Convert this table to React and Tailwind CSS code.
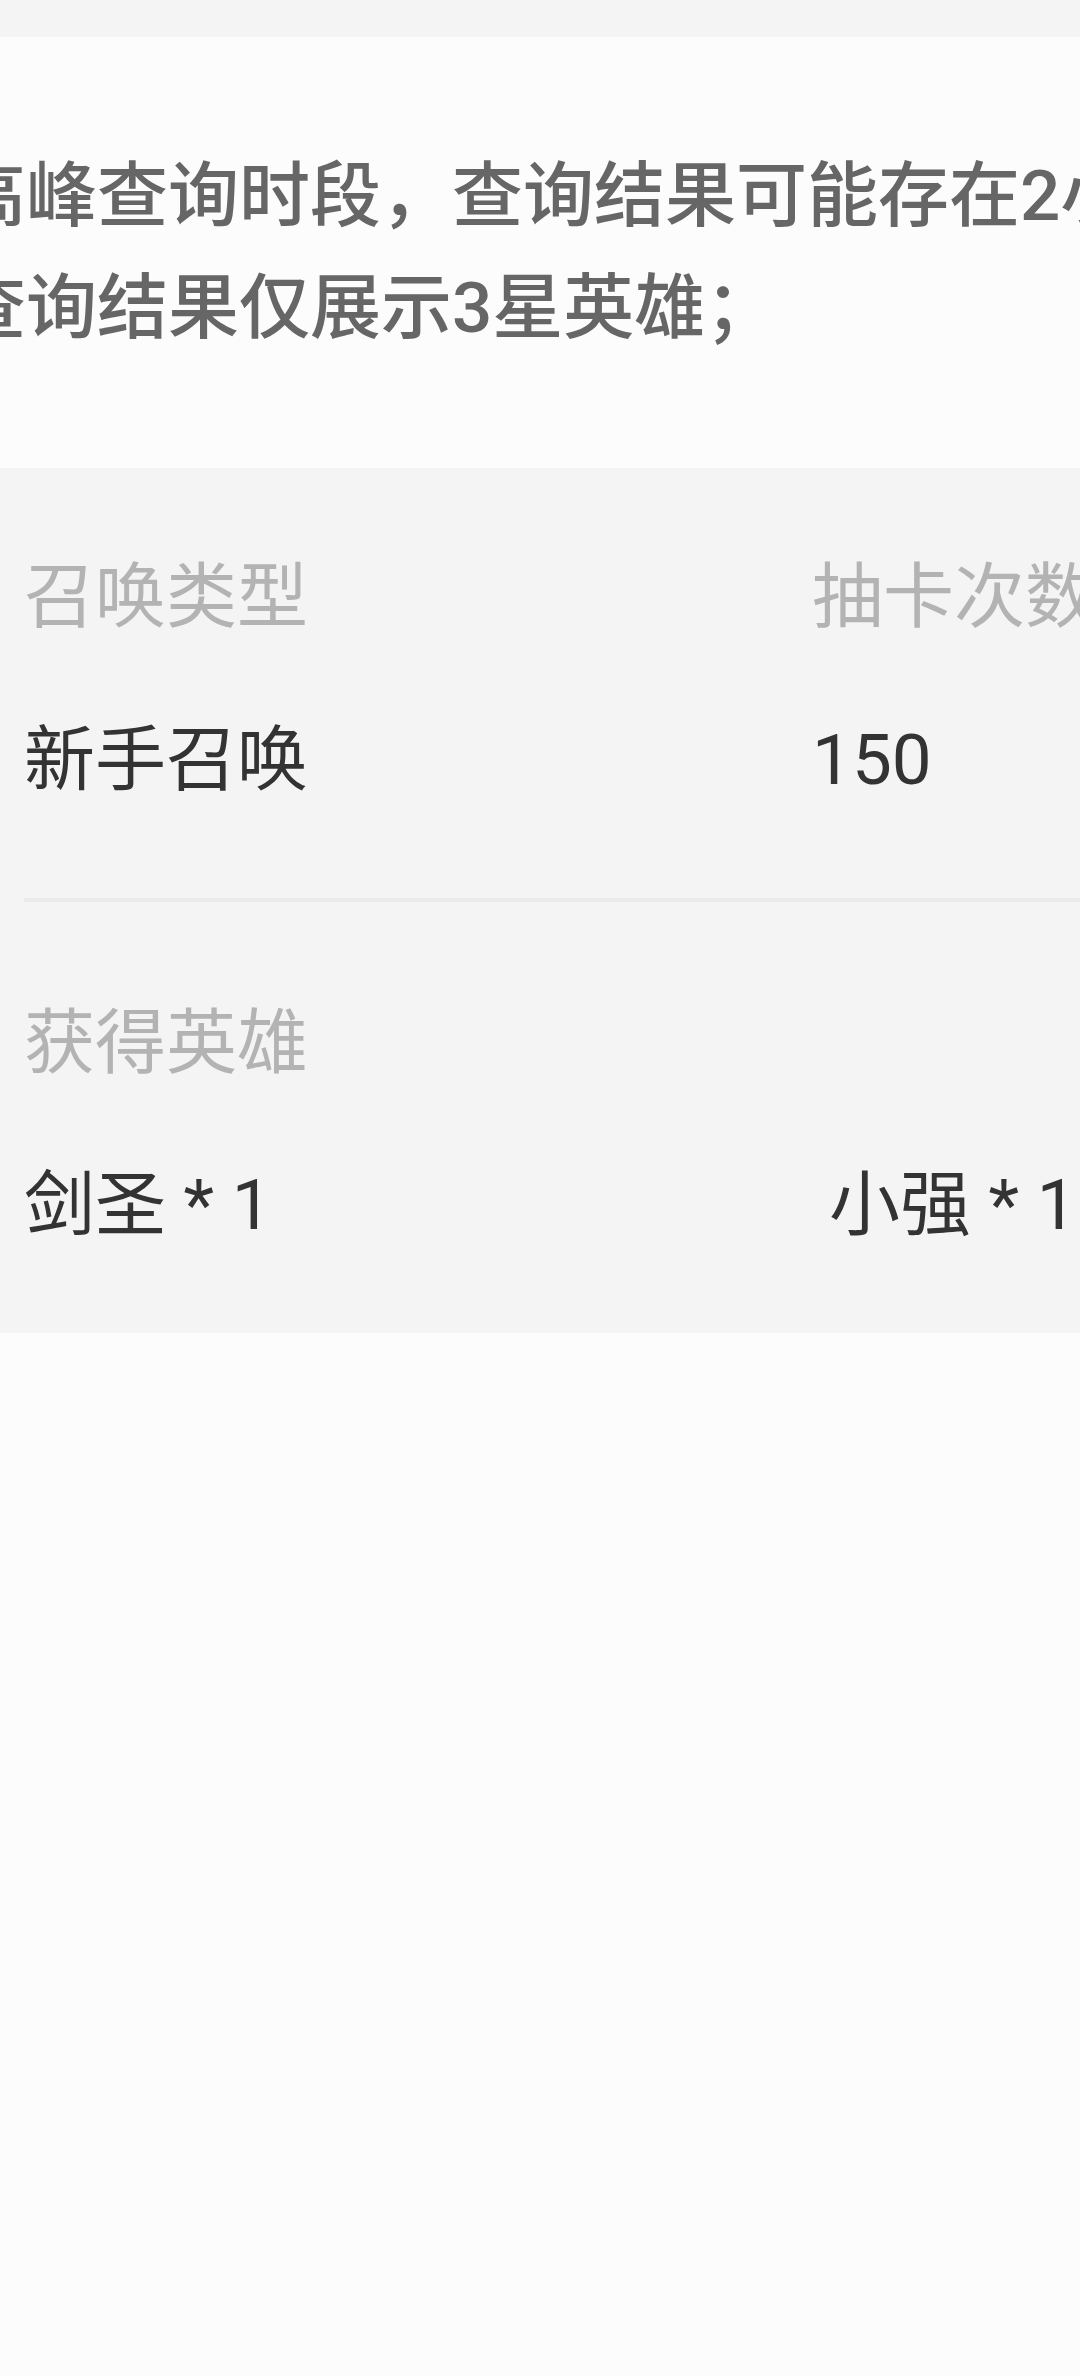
const notes = [
  "高峰查询时段，查询结果可能存在2小时延迟；",
  "查询结果仅展示3星英雄；",
];

const heroes = ["剑圣 * 1", "小强 * 1"];

const Cell = ({ label, value }) => {
  return (
    <div className="flex flex-col">
      <span className="text-[#b3b3b3] leading-[100px]">{label}</span>
      <span className="text-[#333333] leading-[100px] mt-[63px]">{value}</span>
    </div>
  );
};

export default function App() {
  return (
    <div
      className="min-h-screen w-[1080px] overflow-hidden bg-[#fcfcfc] text-[71px]"
      style={{ fontFamily: 'Roboto, "Noto Sans CJK SC", sans-serif' }}
    >
      <div className="h-[37px] bg-[#f4f4f4]" />

      <div className="h-[431px] py-[103px] overflow-hidden">
        {notes.map((n) => (
          <p
            key={n}
            className="ml-[-45px] whitespace-nowrap font-medium leading-[112px] text-[#666666]"
          >
            {n}
          </p>
        ))}
      </div>

      <div className="bg-[#f4f4f4] pl-[24px] pt-[79px] pb-[78px]">
        <div className="grid grid-cols-[788px_1fr] whitespace-nowrap">
          <Cell label="召唤类型" value="新手召唤" />
          <Cell label="抽卡次数" value="150" />
        </div>

        <div className="h-[4px] bg-[#ebebeb] mt-[88px]" />

        <div className="mt-[91px] leading-[100px] text-[#b3b3b3]">获得英雄</div>
        <div className="grid grid-cols-[805px_1fr] mt-[62px] whitespace-nowrap leading-[100px] text-[#333333]">
          {heroes.map((h) => (
            <span key={h}>{h}</span>
          ))}
        </div>
      </div>
    </div>
  );
}
